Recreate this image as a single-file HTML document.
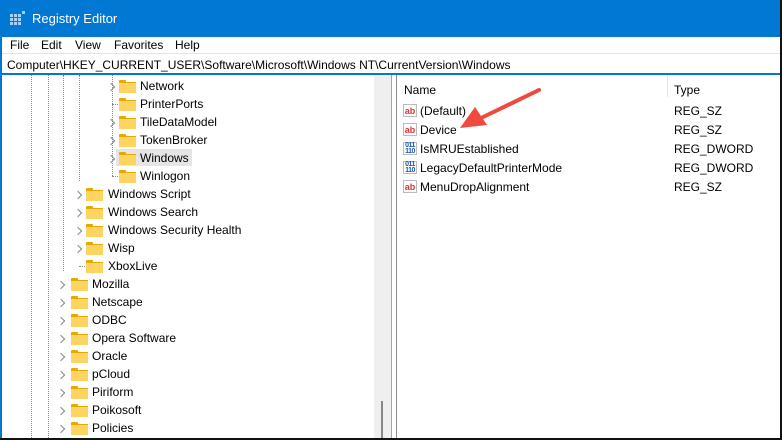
<!DOCTYPE html><html><head><style>
body{margin:0;width:782px;height:440px;overflow:hidden;background:#fff;font-family:"Liberation Sans",sans-serif;font-size:12px;color:#000;position:relative}
.a{position:absolute;white-space:nowrap}
.fold{position:absolute;width:17px;height:13px}
.fold:before{content:"";position:absolute;left:0;top:0;width:7px;height:3px;background:#e8a800;border-radius:1px 1px 0 0}
.fold:after{content:"";position:absolute;left:0;top:2px;width:17px;height:11px;background:#fcd462;border-top:1px solid #e8a800;box-sizing:border-box}
.chev{position:absolute;width:5px;height:5px;border-right:1.3px solid #888;border-top:1.3px solid #888;transform:rotate(45deg)}
.vd{position:absolute;width:0;border-left:1px dotted #888}
.hd{position:absolute;height:0;border-top:1px dotted #888;width:8px}
.ab{position:absolute;width:14px;height:13px;border:1px solid #bbb;background:#fff;color:#d33;font-size:9px;font-weight:bold;line-height:12px;text-align:center;box-sizing:border-box}
.dw{position:absolute;width:14px;height:13px;border:1px solid #bbb;background:#fff;color:#1a55b0;font-size:7px;font-weight:bold;line-height:6px;text-align:center;box-sizing:border-box;letter-spacing:-0.5px}
</style></head><body>
<div class="a" style="left:0;top:0;width:782px;height:37px;background:#0078d4"></div>
<svg class="a" style="top:10px;left:10px" width="16" height="16"><g fill="#9fd4ff"><rect x="0" y="4" width="3" height="3"/><rect x="4" y="4" width="3" height="3"/><rect x="8" y="4" width="3" height="3"/><rect x="0" y="8" width="3" height="3"/><rect x="4" y="8" width="3" height="3"/><rect x="8" y="8" width="3" height="3"/><rect x="0" y="12" width="3" height="3"/><rect x="4" y="12" width="3" height="3"/><rect x="8" y="12" width="3" height="3"/><rect x="12" y="1" width="3" height="3"/></g></svg>
<div class="a" style="left:32px;top:11px;color:#fff;font-size:13px">Registry Editor</div>
<div class="a" style="left:1px;top:37px;width:780px;height:17px;background:#fff"></div>
<div class="a" style="left:10px;top:38px">File</div>
<div class="a" style="left:41px;top:38px">Edit</div>
<div class="a" style="left:75px;top:38px">View</div>
<div class="a" style="left:114px;top:38px">Favorites</div>
<div class="a" style="left:175px;top:38px">Help</div>
<div class="a" style="left:1px;top:53px;width:780px;height:1px;background:#e4e4e4"></div>
<div class="a" style="left:7px;top:58px">Computer\HKEY_CURRENT_USER\Software\Microsoft\Windows NT\CurrentVersion\Windows</div>
<div class="a" style="left:0;top:73px;width:782px;height:2px;background:#0078d4"></div>
<div class="a" style="left:0;top:0;width:2px;height:440px;background:#0078d4"></div>
<div class="a" style="left:780px;top:0;width:2px;height:440px;background:#111"></div>
<div class="a" style="left:0;top:438px;width:782px;height:2px;background:#111"></div>
<div class="a" style="left:374px;top:75px;width:17px;height:363px;background:#efefef"></div>
<div class="a" style="left:381px;top:401px;width:2px;height:37px;background:#888"></div>
<div class="a" style="left:391px;top:75px;width:1px;height:363px;background:#9aa"></div>
<div class="a" style="left:396px;top:75px;width:1px;height:363px;background:#8a8f98"></div>
<div class="vd" style="left:31px;top:75px;height:363px"></div>
<div class="vd" style="left:48px;top:75px;height:363px"></div>
<div class="vd" style="left:63px;top:75px;height:196px"></div>
<div class="vd" style="left:79px;top:75px;height:106px"></div>
<div class="vd" style="left:112px;top:75px;height:101px"></div>
<div class="hd" style="left:112px;top:104px"></div>
<div class="hd" style="left:112px;top:176px"></div>
<div class="hd" style="left:79px;top:266px"></div>
<div class="a" style="left:116px;top:149px;width:76px;height:17px;background:#e5e5e5"></div>
<div id="tree"></div>
<div class="a" style="left:404px;top:83px">Name</div>
<div class="a" style="left:667px;top:75px;width:1px;height:22px;background:#e5e5e5"></div>
<div class="a" style="left:674px;top:83px">Type</div>
<div class="ab" style="left:403px;top:104px">ab</div><div class="a" style="left:420px;top:104px">(Default)</div><div class="a" style="left:674px;top:104px">REG_SZ</div>
<div class="ab" style="left:403px;top:123px">ab</div><div class="a" style="left:420px;top:123px">Device</div><div class="a" style="left:674px;top:123px">REG_SZ</div>
<div class="dw" style="left:403px;top:142px">011<br>110</div><div class="a" style="left:420px;top:142px">IsMRUEstablished</div><div class="a" style="left:674px;top:142px">REG_DWORD</div>
<div class="dw" style="left:403px;top:161px">011<br>110</div><div class="a" style="left:420px;top:161px">LegacyDefaultPrinterMode</div><div class="a" style="left:674px;top:161px">REG_DWORD</div>
<div class="ab" style="left:403px;top:180px">ab</div><div class="a" style="left:420px;top:180px">MenuDropAlignment</div><div class="a" style="left:674px;top:180px">REG_SZ</div>
<svg class="a" style="left:455px;top:85px" width="90" height="50"><line x1="84" y1="5" x2="22" y2="35" stroke="#f04a3e" stroke-width="4" stroke-linecap="round"/><polygon points="5,43 20,22 32,40" fill="#f04a3e"/></svg>
<script>
var rows=[["Network",110,119,140,1],["PrinterPorts",110,119,140,0],["TileDataModel",110,119,140,1],["TokenBroker",110,119,140,1],["Windows",110,119,140,1],["Winlogon",110,119,140,0],["Windows Script",77,86,108,1],["Windows Search",77,86,108,1],["Windows Security Health",77,86,108,1],["Wisp",77,86,108,1],["XboxLive",77,86,108,0],["Mozilla",60,71,92,1],["Netscape",60,71,92,1],["ODBC",60,71,92,1],["Opera Software",60,71,92,1],["Oracle",60,71,92,1],["pCloud",60,71,92,1],["Piriform",60,71,92,1],["Poikosoft",60,71,92,1],["Policies",60,71,92,1]];
var h="";rows.forEach(function(r,i){var y=79+i*18;if(r[4])h+='<div class="chev" style="left:'+(r[1]-2)+'px;top:'+(y+5)+'px"></div>';h+='<div class="fold" style="left:'+r[2]+'px;top:'+(y+1)+'px"></div><div class="a" style="left:'+r[3]+'px;top:'+y+'px">'+r[0]+'</div>';});
document.getElementById("tree").innerHTML=h;
</script>
</body></html>
